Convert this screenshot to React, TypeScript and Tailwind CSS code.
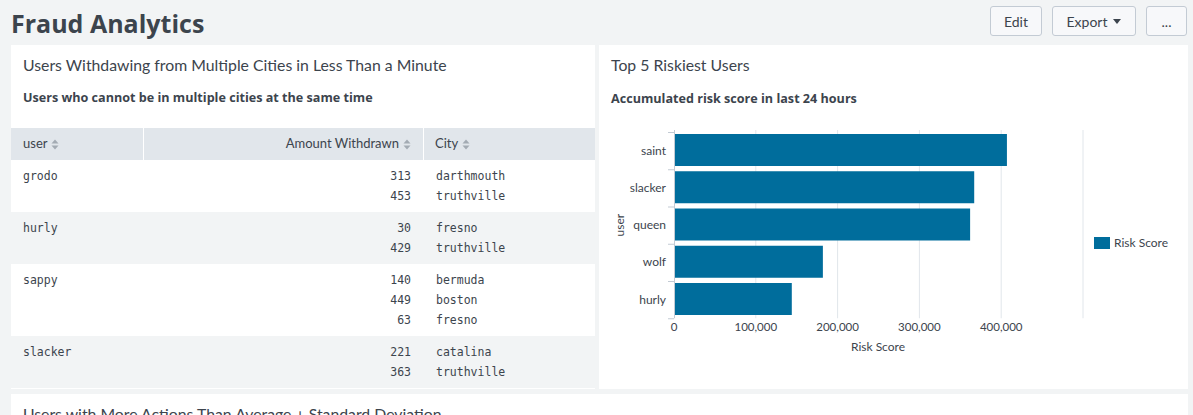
import React from "react";

const SortIcon = () => (
  <svg width="8" height="11" viewBox="0 0 8 11" className="inline-block ml-[4px] align-[-1px]">
    <path d="M4 0.5 L7.5 4.5 L0.5 4.5 Z" fill="#a3abb3" />
    <path d="M4 10.5 L7.5 6.5 L0.5 6.5 Z" fill="#a3abb3" />
  </svg>
);

type Row = { user: string; items: [string, string][] };
const rows: Row[] = [
  { user: "grodo", items: [["313", "darthmouth"], ["453", "truthville"]] },
  { user: "hurly", items: [["30", "fresno"], ["429", "truthville"]] },
  { user: "sappy", items: [["140", "bermuda"], ["449", "boston"], ["63", "fresno"]] },
  { user: "slacker", items: [["221", "catalina"], ["363", "truthville"]] },
];

const bars = [
  { name: "saint", v: 407000 },
  { name: "slacker", v: 367000 },
  { name: "queen", v: 362000 },
  { name: "wolf", v: 182000 },
  { name: "hurly", v: 144000 },
];

function Chart() {
  const ax = 75;
  const scale = 81.8 / 100000;
  const top = 14;
  const band = 37.25;
  const bottom = top + band * 5;
  const font = "Lato, sans-serif";
  return (
    <svg width="589" height="266" viewBox="0 0 589 266" className="block">
      {[1, 2, 3, 4, 5].map((k) => (
        <line key={k} x1={ax + k * 81.8} x2={ax + k * 81.8} y1={top} y2={bottom + 2} stroke="#e1e6eb" strokeWidth="1" />
      ))}
      {bars.map((b, i) => (
        <rect key={b.name} x={ax} y={top + i * band + 4} width={b.v * scale} height={32} fill="#006d9c" />
      ))}
      <line x1={ax + 0.5} x2={ax + 0.5} y1={top} y2={bottom + 2} stroke="#c3cbd4" />
      {[0, 1, 2, 3, 4, 5].map((i) => (
        <line key={i} x1={ax - 6} x2={ax} y1={top + i * band + 2.5} y2={top + i * band + 2.5} stroke="#c3cbd4" />
      ))}
      {bars.map((b, i) => (
        <text key={b.name} x={ax - 8} y={top + i * band + band / 2 + 6} textAnchor="end" fontSize="12" fill="#3c444d" fontFamily={font}>
          {b.name}
        </text>
      ))}
      {["0", "100,000", "200,000", "300,000", "400,000"].map((t, k) => (
        <text key={t} x={ax + k * 81.8} y={bottom + 15} textAnchor="middle" fontSize="11.5" fill="#3c444d" fontFamily={font}>
          {t}
        </text>
      ))}
      <text x={279} y={bottom + 35} textAnchor="middle" fontSize="12" fill="#3c444d" fontFamily={font}>
        Risk Score
      </text>
      <text x={0} y={0} transform={`translate(25 ${top + band * 2.5 + 2}) rotate(-90)`} textAnchor="middle" fontSize="12" fill="#3c444d" fontFamily={font}>
        user
      </text>
      <rect x={495} y={121} width={16} height={12} fill="#006d9c" />
      <text x={515} y={131} fontSize="12" fill="#3c444d" fontFamily={font}>
        Risk Score
      </text>
    </svg>
  );
}

export default function App() {
  return (
    <div className="w-[1193px] h-[415px] overflow-hidden bg-[#f2f4f5] font-['Lato',sans-serif] text-[#3c444d]">
      <div className="h-[45px] flex items-start justify-between pl-[11px] pr-[6px]">
        <h1 className="font-['Open_Sans',sans-serif] text-[25px] font-bold leading-[30px] mt-[8px]">Fraud Analytics</h1>
        <div className="flex gap-[10px] mt-[6px]">
          <button className="h-[30px] w-[52px] rounded-[3px] border border-[#c3cbd4] bg-[#f7f8fa] text-[14px]">Edit</button>
          <button className="h-[30px] w-[84px] rounded-[3px] border border-[#c3cbd4] bg-[#f7f8fa] text-[14px] flex items-center justify-center gap-[6px]">
            Export
            <svg width="8" height="5" viewBox="0 0 8 5"><path d="M0 0 L8 0 L4 5 Z" fill="#3c444d" /></svg>
          </button>
          <button className="h-[30px] w-[41px] rounded-[3px] border border-[#c3cbd4] bg-[#f7f8fa] text-[14px]">...</button>
        </div>
      </div>
      <div className="flex gap-[4px] pl-[11px] pr-[5px]">
        <div className="w-[584px] bg-white pb-[1px]">
          <div className="px-[12px] pt-[10px]">
            <div className="text-[15.8px] leading-[20px]">Users Withdawing from Multiple Cities in Less Than a Minute</div>
            <div className="font-['Open_Sans',sans-serif] text-[12.6px] font-bold leading-[18px] mt-[14px]">Users who cannot be in multiple cities at the same time</div>
          </div>
          <div className="mt-[21px]">
            <div className="flex h-[32px] bg-[#e1e6eb] text-[13px] items-center">
              <div className="w-[133px] pl-[12px] h-full flex items-center border-r border-white">user<SortIcon /></div>
              <div className="w-[280px] pr-[12px] h-full flex items-center justify-end border-r border-white">Amount Withdrawn<SortIcon /></div>
              <div className="flex-1 pl-[11px] h-full flex items-center">City<SortIcon /></div>
            </div>
            {rows.map((r, i) => (
              <div key={r.user} className={`flex py-[6px] font-['DejaVu_Sans_Mono',monospace] text-[11.5px] leading-[20px] ${i % 2 ? "bg-[#f2f4f5]" : "bg-white"}`}>
                <div className="w-[133px] pl-[12px]">{r.user}</div>
                <div className="w-[280px] pr-[13px] text-right">
                  {r.items.map((it, j) => (<div key={j}>{it[0]}</div>))}
                </div>
                <div className="flex-1 pl-[12px]">
                  {r.items.map((it, j) => (<div key={j}>{it[1]}</div>))}
                </div>
              </div>
            ))}
          </div>
        </div>
        <div className="flex-1 bg-white">
          <div className="px-[12px] pt-[10px]">
            <div className="text-[15.8px] leading-[20px]">Top 5 Riskiest Users</div>
            <div className="font-['Open_Sans',sans-serif] text-[12.6px] font-bold leading-[18px] mt-[15px]">Accumulated risk score in last 24 hours</div>
          </div>
          <div className="mt-[8px]">
            <Chart />
          </div>
        </div>
      </div>
      <div className="ml-[11px] mr-[5px] mt-[5px] bg-white px-[12px] pt-[10px] h-[60px]">
        <div className="text-[15.8px] leading-[20px]">Users with More Actions Than Average + Standard Deviation</div>
      </div>
    </div>
  );
}
